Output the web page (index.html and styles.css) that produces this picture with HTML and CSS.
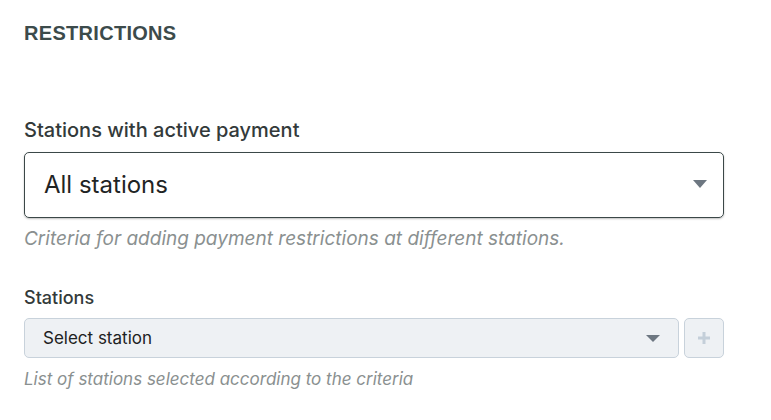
FILE: index.html
```html
<!DOCTYPE html>
<html>
<head>
<meta charset="utf-8">
<link rel="stylesheet" href="styles.css">
</head>
<body>
<div class="page">
  <h2 class="title">RESTRICTIONS</h2>
  <div class="field field-main">
    <label class="label">Stations with active payment</label>
    <div class="select-lg">
      <span class="select-lg-text">All stations</span>
      <span class="caret caret-lg"></span>
    </div>
    <p class="help">Criteria for adding payment restrictions at different stations.</p>
  </div>
  <div class="field field-stations">
    <label class="label label-sm">Stations</label>
    <div class="row">
      <div class="select-sm">
        <span class="select-sm-text">Select station</span>
        <span class="caret caret-sm"></span>
      </div>
      <button class="add-btn" type="button">
        <svg width="14" height="14" viewBox="0 0 14 14"><path d="M7 1v12M1 7h12" stroke="#c4cfd9" stroke-width="3"/></svg>
      </button>
    </div>
    <p class="help help-sm">List of stations selected according to the criteria</p>
  </div>
</div>
</body>
</html>
```
FILE: styles.css
```css
html, body { margin: 0; padding: 0; background: #fff; }
body { font-family: Inter, "Noto Sans", sans-serif; color: #2f3535; }
.page { padding: 21px 47px 0 24px; }
.title {
  margin: 0;
  font-family: "Liberation Sans", Arial, sans-serif;
  font-weight: 700;
  font-size: 20px;
  line-height: 24px;
  letter-spacing: 0.3px;
  color: #3c4b4b;
}
.field-main { margin-top: 73px; }
.label {
  display: block;
  font-size: 20px;
  font-weight: 500;
  line-height: 24px;
  color: #333a3a;
}
.select-lg {
  margin-top: 10px;
  height: 62px;
  border: 1px solid #3b4848;
  border-radius: 5px;
  box-shadow: 0 1px 2px rgba(0,0,0,0.25);
  display: flex;
  align-items: center;
  justify-content: space-between;
  padding: 0 16px 2px 19px;
}
.select-lg-text { font-size: 24px; color: #1f2424; font-weight: 400; }
.caret {
  width: 0; height: 0;
  border-left: 7px solid transparent;
  border-right: 7px solid transparent;
  border-top: 8px solid #6d7781;
}
.caret-sm {
  border-top-width: 7px;
  margin-right: 4px;
}
.help {
  margin: 9px 0 0;
  font-style: italic;
  font-size: 19px;
  line-height: 24px;
  color: #8a9090;
}
.field-stations { margin-top: 36px; }
.label-sm { font-size: 18px; line-height: 22px; }
.row { display: flex; gap: 5px; margin-top: 9px; }
.select-sm {
  flex: 1;
  height: 38px;
  border: 1px solid #c8d2db;
  border-radius: 5px;
  background: #eef1f4;
  display: flex;
  align-items: center;
  justify-content: space-between;
  padding: 0 14px 0 18px;
}
.select-sm-text { font-size: 17px; color: #1d2222; }
.add-btn {
  width: 40px;
  height: 40px;
  border: 1px solid #c8d2db;
  border-radius: 5px;
  background: #eef1f4;
  padding: 0;
  display: flex;
  align-items: center;
  justify-content: center;
}
.help-sm { margin-top: 10px; font-size: 17px; line-height: 22px; }
```
